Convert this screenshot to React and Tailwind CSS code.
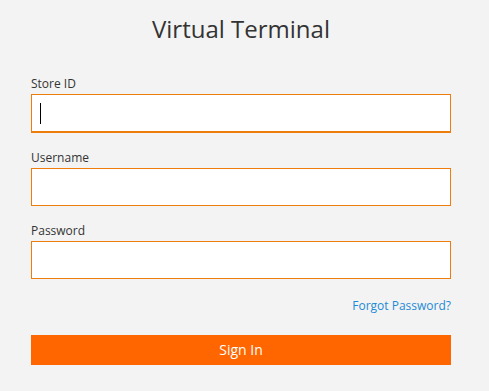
import { useState } from "react";

export default function App() {
  const [storeId, setStoreId] = useState("");
  const [username, setUsername] = useState("");
  const [password, setPassword] = useState("");

  return (
    <div className="w-full min-h-screen bg-[#f3f3f3] font-['Open_Sans',sans-serif] text-[#333333]">
      <div className="ml-[31px] w-[420px] pt-[13px]">
        <h1 className="text-center text-[24px] leading-[32px] font-normal text-[#333333]">
          Virtual Terminal
        </h1>

        <form className="mt-[31px]" onSubmit={(e) => e.preventDefault()}>
          <label className="block">
            <span className="block text-[12px] leading-[16px] mb-[2px]">Store ID</span>
            <span className="relative block">
              <input
                type="text"
                value={storeId}
                onChange={(e) => setStoreId(e.target.value)}
                className="block w-full h-[39px] bg-white border border-b-2 border-[#ef7d0b] px-2 outline-none"
              />
              {storeId === "" && (
                <span className="pointer-events-none absolute left-[9px] top-[9px] w-px h-[21px] bg-black" />
              )}
            </span>
          </label>

          <label className="block mt-[17px]">
            <span className="block text-[12px] leading-[16px] mb-[2px]">Username</span>
            <input
              type="text"
              value={username}
              onChange={(e) => setUsername(e.target.value)}
              className="block w-full h-[38px] bg-white border border-[#ef7d0b] px-2 outline-none"
            />
          </label>

          <label className="block mt-[17px]">
            <span className="block text-[12px] leading-[16px] mb-[2px]">Password</span>
            <input
              type="password"
              value={password}
              onChange={(e) => setPassword(e.target.value)}
              className="block w-full h-[38px] bg-white border border-[#ef7d0b] px-2 outline-none"
            />
          </label>

          <div className="mt-[19px] flex justify-end">
            <a href="#" className="text-[12px] leading-[16px] text-[#1d8ad6]">
              Forgot Password?
            </a>
          </div>

          <button
            type="submit"
            className="mt-[21px] block w-full h-[30px] bg-[#ff6600] text-white text-[14px] leading-[30px]"
          >
            Sign In
          </button>
        </form>
      </div>
    </div>
  );
}
